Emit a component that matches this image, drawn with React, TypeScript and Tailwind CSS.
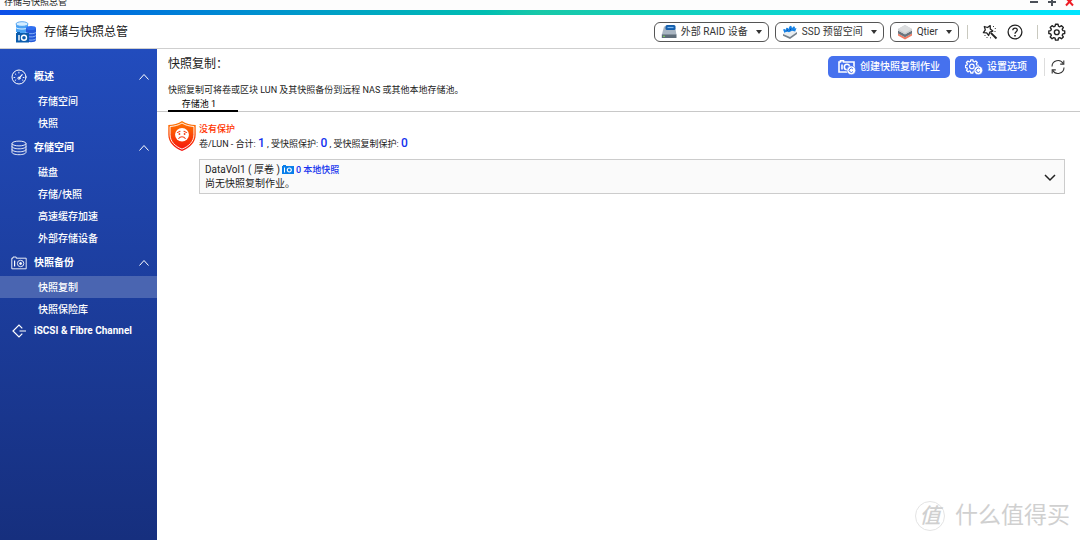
import type { ReactNode } from 'react';
import clsx from 'clsx';

type NavGroup = {
  label: string;
  icon: ReactNode;
  items: string[];
};

const GaugeIcon = () => (
  <svg className="size-4" viewBox="0 0 16 16" fill="none" stroke="currentColor" strokeLinecap="round" aria-hidden="true">
    <circle cx="8" cy="8" r="7" />
    <path d="M8.600 8.600 11.200 5.600" strokeWidth="1.200" />
    <circle cx="8" cy="9.200" r="1.100" />
    <path d="M3 8.500h.8M4.300 5l.6.5M7.900 3.200v.8M12.200 8.500h.8M4.200 11.400l.6-.4M11.400 11l.6.4" strokeWidth=".9" />
  </svg>
);

const DisksIcon = () => (
  <svg className="size-4" viewBox="0 0 16 16" fill="none" stroke="currentColor" strokeWidth=".9" aria-hidden="true">
    <ellipse cx="8" cy="3.500" rx="7" ry="2.400" />
    <path d="M1 3.500v8.800c0 1.300 3.100 2.400 7 2.400s7-1.100 7-2.400V3.500" />
    <path d="M1 6.400c0 1.300 3.100 2.400 7 2.400s7-1.100 7-2.400M1 9.400c0 1.300 3.100 2.400 7 2.400s7-1.100 7-2.400" />
  </svg>
);

const SnapshotIcon = () => (
  <svg className="size-4" viewBox="0 0 16 16" fill="none" stroke="currentColor" strokeWidth=".9" aria-hidden="true">
    <path d="M.8 13.800V3.200H2V2h3.200v1.200h10v10.600z" />
    <path d="M3.600 5.500v6" strokeWidth="1.200" />
    <circle cx="9.600" cy="8.500" r="3.200" />
    <circle cx="9.600" cy="8.500" r="1" fill="currentColor" />
  </svg>
);

const IscsiIcon = () => (
  <svg className="size-4" viewBox="0 0 16 16" fill="none" stroke="currentColor" strokeWidth="1.200" aria-hidden="true">
    <path d="M11.300 5.300 8 2 2 8l6 6 3.300-3.300M8.500 8H15" />
  </svg>
);

const groups: NavGroup[] = [
  { label: '概述', icon: <GaugeIcon />, items: ['存储空间', '快照'] },
  { label: '存储空间', icon: <DisksIcon />, items: ['磁盘', '存储/快照', '高速缓存加速', '外部存储设备'] },
  { label: '快照备份', icon: <SnapshotIcon />, items: ['快照复制', '快照保险库'] },
];

const AppLogo = () => (
  <svg className="size-[22px]" viewBox="0 0 22 22" aria-hidden="true">
    <path d="M1 3v8h12V3z" fill="#4aa3f5" />
    <ellipse cx="7" cy="10" rx="6" ry="2" fill="#4aa3f5" />
    <ellipse cx="7" cy="3" rx="6" ry="2.300" fill="#d4edff" stroke="#3d96ee" strokeWidth=".8" />
    <path d="M1 6.500c1 2 11 2 12 0" fill="none" stroke="#e6f4ff" />
    <path d="M11 7v12c0 3 10 3 10 0V7z" fill="#2459d8" />
    <ellipse cx="16" cy="7" rx="5" ry="2" fill="#2f6ff0" />
    <path d="M11 11.200c1 2 9 2 10 0M11 14.400c1 2 9 2 10 0M11 17.600c1 2 9 2 10 0" fill="none" stroke="#9cc6ff" strokeWidth=".8" />
    <path d="M1 12h1V11h3v1h9v9.500H1z" fill="#0b5cad" />
    <path d="M4 14v5.500" stroke="#fff" strokeWidth="1.400" />
    <circle cx="9" cy="16.700" r="2.500" fill="none" stroke="#fff" strokeWidth="1.400" />
  </svg>
);

const RaidIcon = () => (
  <svg className="size-4" viewBox="0 0 16 16" aria-hidden="true">
    <path d="M3 2.500h11l1.500 8.500H.8z" fill="#aab6c2" />
    <path d="M.8 10.500h14.700V14H.8z" fill="#5f6d79" />
    <rect x="4.500" y="1" width="10" height="5" rx="1.500" fill="#1660ad" />
    <path d="M6.500 3.500h6" stroke="#7db9f2" strokeWidth="1.200" />
    <path d="M2 12.300h2" stroke="#7fdc5a" />
  </svg>
);

const SsdIcon = () => (
  <svg className="size-4" viewBox="0 0 16 16" aria-hidden="true">
    <path d="M1 10v1.800l7 3.200 7-5V8z" fill="#76818b" />
    <path d="M1 10 9 5.500 15 8l-7 5z" fill="#e8edf1" />
    <path d="M1 5.500 3 5v1.500l1.500-2.700L6 4v1.500l2-3.700 1.800.7v1.700l2-2 1.200.8-.3 1.500L14.500 4l-1.300 3.500-3.200-.8-3 1.600-2.500-.8L2.500 9z" fill="#1683e6" />
    <path d="m4.500 7.500 1.500-2M8 6.500l1-2" stroke="#0a4fa8" />
  </svg>
);

const QtierIcon = () => (
  <svg className="size-4" viewBox="0 0 16 16" aria-hidden="true">
    <path d="m1 9.500 7 3.800 7-3.800v2L8 15.500 1 11.500z" fill="#f27a62" />
    <path d="m1 6.500 7 3.800 7-3.800v3L8 13.300 1 9.500z" fill="#69737c" />
    <path d="m1 5 7-4 7 4v1.500l-7 4-7-4z" fill="#c9cccf" />
    <path d="m1 5 7-4 7 4-7 4z" fill="#dcdedf" />
  </svg>
);

const tools = [
  { label: '外部 RAID 设备', icon: <RaidIcon /> },
  { label: 'SSD 预留空间', icon: <SsdIcon /> },
  { label: 'Qtier', icon: <QtierIcon /> },
];

const WandIcon = () => (
  <svg className="size-4" viewBox="0 0 16 16" fill="none" stroke="currentColor" strokeWidth="1.300" strokeLinejoin="round" aria-hidden="true">
    <path d="m2.300 2.500 3.200 1L8.200 1.600l.1 3.400 2.500 2.100-3 1L6.600 11.500 4.700 8.800 1.400 8.700l1.900-2.800z" />
    <path d="m8.800 8.800 5.700 5.700" strokeWidth="1.900" />
    <path d="M11 2.500h1M12.800 4.500h1M12.500 7.500h1M2.500 11.500h1M4.500 13.500h1M8 13.800h1" strokeWidth=".9" />
  </svg>
);

const HelpIcon = () => (
  <svg className="size-4" viewBox="0 0 16 16" fill="none" stroke="currentColor" strokeWidth="1.300" aria-hidden="true">
    <circle cx="8" cy="8" r="6.900" />
    <path d="M5.800 6.300C5.800 3.300 10.300 3.400 10.300 6.100 10.300 7.700 8 7.800 8 9.700" />
    <path d="M8 10.900v1.500" strokeWidth="1.600" />
  </svg>
);

const GEAR_PATH =
  'M7.600 1.200h2.800l.4 2.100 1.500.6 1.800-1.200 2 2-1.200 1.800.6 1.500 2.100.4v2.800l-2.100.4-.6 1.500 1.200 1.800-2 2-1.800-1.200-1.500.6-.4 2.100H7.600l-.4-2.100-1.500-.6-1.800 1.200-2-2 1.200-1.800-.6-1.500-2.100-.4V8.400l2.100-.4.600-1.500-1.200-1.800 2-2 1.800 1.200 1.500-.6z';

const GearIcon = () => (
  <svg className="size-[18px]" viewBox="-.5 -.2 19.500 19.500" fill="none" stroke="currentColor" strokeWidth="1.500" strokeLinejoin="round" aria-hidden="true">
    <path d={GEAR_PATH} />
    <circle cx="9" cy="9.800" r="2.600" />
  </svg>
);

const GearCopyIcon = () => (
  <svg className="h-4 w-[18px]" viewBox="0 0 18 16" fill="none" stroke="currentColor" aria-hidden="true">
    <g transform="scale(.76)">
      <path d={GEAR_PATH} strokeWidth="1.700" strokeLinejoin="round" />
      <circle cx="9" cy="9.800" r="3" strokeWidth="1.700" />
    </g>
    <circle cx="13.300" cy="11.300" r="4.400" fill="currentColor" stroke="#4671ee" strokeWidth=".6" />
    <path d="M15 10.100a2.100 2.100 0 1 0 0 2.400" stroke="#4671ee" />
  </svg>
);

const SnapshotCopyIcon = () => (
  <svg className="h-4 w-[18px]" viewBox="0 0 18 16" fill="none" stroke="currentColor" aria-hidden="true">
    <path d="M1 13V3h1.500V1.800h3V3H16v10z" strokeWidth="1.600" />
    <path d="M4 5.500v5" strokeWidth="1.600" />
    <circle cx="9" cy="8" r="2.700" strokeWidth="1.600" />
    <circle cx="13.300" cy="11.300" r="4.400" fill="currentColor" stroke="#4671ee" strokeWidth=".6" />
    <path d="M15 10.100a2.100 2.100 0 1 0 0 2.400" stroke="#4671ee" />
  </svg>
);

const RefreshIcon = () => (
  <svg className="size-4" viewBox="0 0 16 16" fill="none" stroke="currentColor" strokeWidth="1.100" aria-hidden="true">
    <path d="M2 7.500a6 6 0 0 1 11.300-2.700M14 8.500A6 6 0 0 1 2.700 11.200" />
    <path d="M13.800 1.500v3.600h-3.600M2.200 14.500v-3.600h3.600" />
  </svg>
);

const ShieldIcon = () => (
  <svg className="h-[30px] w-7 shrink-0" viewBox="0 0 27 30" preserveAspectRatio="none" aria-hidden="true">
    <defs>
      <linearGradient id="shield" x1="0" y1="0" x2="0" y2="1">
        <stop offset="0" stopColor="#ff7a00" />
        <stop offset="1" stopColor="#f5100c" />
      </linearGradient>
    </defs>
    <path d="M13.500 0C10 2.700 5 3.800.3 4v9.500c0 8 5.700 13.500 13.200 16.400 7.500-2.900 13.200-8.400 13.200-16.400V4C22 3.800 17 2.700 13.500 0z" fill="url(#shield)" />
    <path d="M13.500 2C10 4.400 6 5.200 2 5.500v8.200c0 6.800 4.900 11.700 11.500 14.400C20.100 25.400 25 20.500 25 13.700V5.500C21 5.200 17 4.400 13.500 2z" fill="none" stroke="#fff" strokeWidth=".9" />
    <circle cx="13.500" cy="13.800" r="6.700" fill="#fff" />
    <path d="m9 11.600 2.600-1.300M18 11.600l-2.600-1.300M10.300 17.600c1.300-2.600 5.100-2.600 6.400 0" fill="none" stroke="#f4401a" strokeWidth="1" strokeLinecap="round" />
    <circle cx="11" cy="13" r=".9" fill="#f4401a" />
    <circle cx="16" cy="13" r=".9" fill="#f4401a" />
  </svg>
);

function TitleBar() {
  return (
    <div className="flex h-[10px] justify-between overflow-hidden bg-[#fdfdfd] pl-1 pr-[5px]">
      <span className="text-[9px] leading-[4px] text-[#222]">存储与快照总管</span>
      <div className="flex gap-2 text-[#4b5058]">
        <button aria-label="最小化">
          <svg className="block h-[10px] w-[10px]" viewBox="0 0 10 10" stroke="currentColor" strokeWidth="2"><path d="M1 2h8" /></svg>
        </button>
        <button aria-label="最大化">
          <svg className="block h-[10px] w-[10px]" viewBox="0 0 10 10" stroke="currentColor" strokeWidth="2"><path d="M1 2h8M5-2v8" /></svg>
        </button>
        <button aria-label="关闭" className="text-[#ee1c25]">
          <svg className="block h-[10px] w-[10px]" viewBox="0 0 10 10" stroke="currentColor" strokeWidth="2"><path d="m1-2 7 7.500M8-2 1 5.500" /></svg>
        </button>
      </div>
    </div>
  );
}

function Header() {
  return (
    <header className="flex h-[34px] items-center justify-between border-b border-[#cfcfcf] pl-[15px] pr-[14px]">
      <div className="flex items-center gap-[7px]">
        <AppLogo />
        <h1 className="text-[12px] leading-4 text-[#222]">存储与快照总管</h1>
      </div>
      <div className="flex items-center">
        <div className="flex gap-[6px]">
          {tools.map((tool) => (
            <button
              key={tool.label}
              aria-haspopup="menu"
              className="flex h-5 items-center rounded-[6px] border border-[#555] px-[6px] text-[10px] leading-4 text-[#333]"
            >
              {tool.icon}
              <span className="ml-1 mr-2">{tool.label}</span>
              <svg className="h-1 w-[6px]" viewBox="0 0 6 4" aria-hidden="true"><path d="M0 0h6L3 4z" fill="#333" /></svg>
            </button>
          ))}
        </div>
        <span className="ml-2 mr-[14px] h-[14px] w-px bg-[#c9c9bf]" />
        <div className="flex items-center gap-[9px] text-[#222]">
          <button aria-label="向导"><WandIcon /></button>
          <button aria-label="帮助"><HelpIcon /></button>
        </div>
        <span className="ml-[14px] mr-[10px] h-[14px] w-px bg-[#c9c9bf]" />
        <button aria-label="设置" className="text-[#222]"><GearIcon /></button>
      </div>
    </header>
  );
}

function Sidebar() {
  return (
    <nav className="w-[157px] shrink-0 bg-linear-to-b from-[#224cbd] to-[#162f7e] pt-[14px] text-[10px] leading-4 text-white">
      {groups.map((group) => (
        <section key={group.label}>
          <button className="flex h-[27px] w-full items-center pl-[11px] pr-2 text-left font-bold">
            {group.icon}
            <span className="ml-[7px] flex-1">{group.label}</span>
            <svg className="h-[6px] w-[10px]" viewBox="0 0 10 6" fill="none" stroke="currentColor" aria-hidden="true"><path d="m.5 5.500 4.500-5 4.500 5" /></svg>
          </button>
          <ul>
            {group.items.map((item) => (
              <li key={item}>
                <a
                  href="#"
                  className={clsx('flex h-[22px] items-center pl-[38px] pt-px font-medium', item === '快照复制' && 'bg-[#4a65b1]')}
                >
                  {item}
                </a>
              </li>
            ))}
          </ul>
        </section>
      ))}
      <a href="#" className="flex h-[22px] items-center gap-[7px] pl-[11px] font-bold">
        <IscsiIcon />
        iSCSI &amp; Fibre Channel
      </a>
    </nav>
  );
}

const Count = ({ value }: { value: number }) => <span className="text-[12px] font-medium text-[#1432ee]">{value}</span>;

function SnapshotReplica() {
  return (
    <main className="min-w-0 flex-1 pt-[7px] text-[#222]">
      <div className="flex h-[22px] items-center justify-between pl-[11px] pr-[14px]">
        <h2 className="self-start text-[12px] leading-4">快照复制：</h2>
        <div className="flex items-center gap-[5px] text-[10px] font-medium leading-4 text-white">
          <button className="flex h-[22px] items-center gap-1 rounded-[5px] bg-[#4671ee] px-[10px]">
            <SnapshotCopyIcon />
            创建快照复制作业
          </button>
          <button className="flex h-[22px] items-center gap-1 rounded-[5px] bg-[#4671ee] px-[10px]">
            <GearCopyIcon />
            设置选项
          </button>
          <span className="ml-[2px] h-[18px] w-px bg-[#ddd]" />
          <button aria-label="刷新" className="text-[#333]"><RefreshIcon /></button>
        </div>
      </div>
      <p className="mt-1 pl-[11px] text-[9px] leading-4">
        快照复制可将卷或区块 LUN 及其快照备份到远程 NAS 或其他本地存储池。
      </p>
      <div role="tablist" className="flex h-[14px] border-b border-[#c8c8c8] pl-[11px]">
        <button role="tab" aria-selected="true" className="-mb-px h-[14px] w-[70px] border-b-2 border-black pr-2 text-[9px] leading-3 text-black">
          存储池 1
        </button>
      </div>
      <section className="flex gap-[3px] pl-[11px] pr-[15px] pt-[9px]">
        <ShieldIcon />
        <div className="min-w-0 flex-1">
          <p className="text-[9px] font-medium leading-4 text-[#ff3300]">没有保护</p>
          <p className="text-[9px] leading-3">
            卷/LUN - 合计: <Count value={1} /> , 受快照保护: <Count value={0} /> , 受快照复制保护: <Count value={0} />
          </p>
          <div className="mt-[9px] flex h-[35px] items-center justify-between border border-[#ccc] bg-[#fafafa] pl-[5px] pr-2 text-[10px] leading-[14px]">
            <div>
              <div className="flex items-center">
                DataVol1 ( 厚卷 )
                <svg className="mx-[2px] h-[9px] w-3" viewBox="0 0 12 9" aria-hidden="true">
                  <path d="M0 1h1V0h3v1h8v8H0z" fill="#0a7fea" />
                  <path d="M2.500 2.500v5" stroke="#fff" />
                  <circle cx="7.300" cy="5" r="2" fill="none" stroke="#fff" strokeWidth="1.200" />
                </svg>
                <a href="#" className="text-[9px] font-medium text-[#1432ee]">0 本地快照</a>
              </div>
              <p>尚无快照复制作业。</p>
            </div>
            <button aria-label="展开">
              <svg className="h-3 w-3" viewBox="0 0 12 12" fill="none" stroke="#222" strokeWidth="1.500" aria-hidden="true"><path d="m1 4 5 5 5-5" /></svg>
            </button>
          </div>
        </div>
      </section>
    </main>
  );
}

export default function App() {
  return (
    <div className="relative flex min-h-screen flex-col bg-white font-[Roboto,'Noto_Sans_CJK_SC',sans-serif]">
      <TitleBar />
      <div className="h-[5px] bg-linear-to-r from-[#0f4fe8] via-[#18c8a8] to-[#00e5ff]" />
      <Header />
      <div className="flex flex-1">
        <Sidebar />
        <SnapshotReplica />
      </div>
      <div className="absolute bottom-2 right-[10px] flex items-center gap-[10px] text-[#d0d0d0]">
        <span className="flex size-[30px] items-center justify-center rounded-full border border-[#e4e4e4] text-[21px] font-medium italic leading-6">值</span>
        <span className="text-[23px] leading-8">什么值得买</span>
      </div>
    </div>
  );
}
